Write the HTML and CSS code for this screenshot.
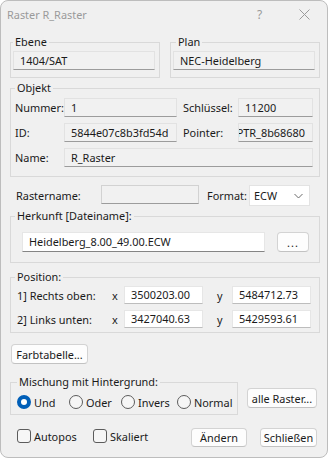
FILE: index.html
```html
<!DOCTYPE html>
<html lang="de">
<head>
    <meta charset="UTF-8">
    <title>Raster R_Raster</title>
    <link rel="stylesheet" href="styles.css">
</head>
<body>
    <div class="window">
        <div class="titlebar">
            <span class="title">Raster R_Raster</span>
            <span class="title-btn">?</span>
            <span class="title-btn">
                <svg width="11" height="11" viewBox="0 0 11 11"><path d="M0.5 0.5 L10.5 10.5 M10.5 0.5 L0.5 10.5" stroke="#9a9a9a" stroke-width="1" fill="none"/></svg>
            </span>
        </div>

        <div class="content">
            <div class="row-top">
                <fieldset class="group group-small">
                    <legend>Ebene</legend>
                    <div class="field readonly">1404/SAT</div>
                </fieldset>
                <fieldset class="group group-small plan">
                    <legend>Plan</legend>
                    <div class="field readonly">NEC-Heidelberg</div>
                </fieldset>
            </div>

            <fieldset class="group objekt">
                <legend>Objekt</legend>
                <div class="objekt-grid">
                    <span class="lbl">Nummer:</span>
                    <div class="field readonly">1</div>
                    <span class="lbl lbl-right">Schlüssel:</span>
                    <div class="field readonly">11200</div>

                    <span class="lbl">ID:</span>
                    <div class="field readonly">5844e07c8b3fd54d</div>
                    <span class="lbl lbl-right">Pointer:</span>
                    <div class="field readonly clip-left"><span>PTR_8b68680</span></div>

                    <span class="lbl">Name:</span>
                    <div class="field readonly span-3">R_Raster</div>
                </div>
            </fieldset>

            <div class="rastername-row">
                <span class="lbl rn-label">Rastername:</span>
                <div class="field readonly rn-field"></div>
                <span class="lbl format-label">Format:</span>
                <div class="select">
                    <span>ECW</span>
                    <svg width="9" height="6" viewBox="0 0 9 6"><path d="M0.5 1 L4.5 5 L8.5 1" stroke="#6a6a6a" stroke-width="1" fill="none"/></svg>
                </div>
            </div>

            <fieldset class="group herkunft">
                <legend>Herkunft [Dateiname]:</legend>
                <div class="file-row">
                    <div class="field edit file-field">Heidelberg_8.00_49.00.ECW</div>
                    <button class="btn dots">...</button>
                </div>
            </fieldset>

            <fieldset class="group position">
                <legend>Position:</legend>
                <div class="pos-grid">
                    <span class="lbl pos-label">1] Rechts oben:</span>
                    <span class="lbl">x</span>
                    <div class="field edit">3500203.00</div>
                    <span class="lbl pos-y">y</span>
                    <div class="field edit">5484712.73</div>

                    <span class="lbl pos-label">2] Links unten:</span>
                    <span class="lbl">x</span>
                    <div class="field edit">3427040.63</div>
                    <span class="lbl pos-y">y</span>
                    <div class="field edit">5429593.61</div>
                </div>
            </fieldset>

            <button class="btn farb">Farbtabelle...</button>

            <div class="misch-row">
                <fieldset class="group misch">
                    <legend>Mischung mit Hintergrund:</legend>
                    <div class="radios">
                        <label class="radio r-und"><span class="dot checked"></span>Und</label>
                        <label class="radio r-oder"><span class="dot"></span>Oder</label>
                        <label class="radio r-invers"><span class="dot"></span>Invers</label>
                        <label class="radio"><span class="dot"></span>Normal</label>
                    </div>
                </fieldset>
                <button class="btn alle">alle Raster...</button>
            </div>

            <div class="bottom-row">
                <label class="check c-auto"><span class="box"></span>Autopos</label>
                <label class="check"><span class="box"></span>Skaliert</label>
                <button class="btn aendern">Ändern</button>
                <button class="btn schliessen">Schließen</button>
            </div>
        </div>
    </div>
</body>
</html>
```

FILE: styles.css
```css
* {
    box-sizing: border-box;
}

body {
    margin: 0;
    background-color: #ffffff;
    font-family: 'Noto Sans', sans-serif;
    font-size: 10.9px;
    color: #1a1a1a;
}

.window {
    width: 328px;
    height: 458px;
    background-color: #f0f0f0;
    border: 1px solid #bdbdbd;
    border-radius: 8px;
    overflow: hidden;
}

/* title bar */
.titlebar {
    height: 30px;
    display: flex;
    align-items: center;
    padding-left: 6px;
    padding-bottom: 4px;
    color: #9a9a9a;
}

.title {
    flex: 1;
}

.title-btn {
    width: 45px;
    display: flex;
    justify-content: center;
    align-items: center;
    font-size: 12px;
}

.content {
    padding: 0 7px 0 9px;
}

/* group boxes */
.group {
    margin: 0;
    border: 1px solid #d9d9d9;
    min-width: 0;
}

.group legend {
    padding: 0 2px;
    line-height: 14px;
    height: 14px;
}

.row-top {
    display: flex;
    gap: 10px;
    margin-top: 4px;
}

.group-small {
    flex: 1;
    padding: 2px 4px 7px 2px;
}

.plan legend {
    margin-left: 3px;
}

.objekt {
    margin-top: 3px;
    padding: 3px 6px 9px 4px;
}

.objekt-grid {
    display: grid;
    grid-template-columns: 49px 113px 61px 75px;
    grid-auto-rows: 19px;
    row-gap: 6px;
    align-items: center;
}

.lbl {
    white-space: nowrap;
}

.lbl-right {
    padding-left: 6px;
}

.span-3 {
    grid-column: span 3;
}

/* text fields */
.field {
    height: 19px;
    line-height: 17px;
    padding: 0 6px;
    white-space: nowrap;
    overflow: hidden;
    border: 1px solid #e2e2e2;
}

.readonly {
    background-color: #f1f1f1;
    border-bottom-color: #9c9c9c;
}

.edit {
    background-color: #ffffff;
    border-color: #e6e6e6;
    border-bottom-color: #bdbdbd;
}

.clip-left {
    display: flex;
    justify-content: flex-end;
    padding-right: 7px;
}

.clip-left span {
    flex-shrink: 0;
}

.rastername-row {
    display: flex;
    align-items: flex-start;
    margin-top: 8px;
    height: 21px;
}

.rastername-row .lbl {
    line-height: 21px;
}

.rn-label {
    width: 91px;
    padding-left: 6px;
}

.rn-field {
    width: 98px;
    border-color: #d2d2d2;
    border-bottom-color: #9c9c9c;
}

.format-label {
    width: 42px;
    margin-left: 8px;
}

.select {
    width: 61px;
    height: 21px;
    background-color: #ffffff;
    border: 1px solid #e3e3e3;
    display: flex;
    align-items: center;
    justify-content: space-between;
    padding: 0 6px 0 4px;
}

.herkunft {
    margin-top: 3px;
    padding: 9px 10px 10px 4px;
}

.file-row {
    display: flex;
    align-items: center;
    gap: 12px;
    padding-left: 7px;
}

.file-field {
    flex: 1;
    height: 20px;
    line-height: 18px;
    border-bottom-color: #858585;
}

/* buttons */
.btn {
    font-family: inherit;
    font-size: inherit;
    color: #1a1a1a;
    background-color: #fdfdfd;
    border: 1px solid #d3d3d3;
    border-bottom-color: #c2c2c2;
    border-radius: 4px;
    padding: 0;
    height: 20px;
    line-height: 17px;
}

.dots {
    width: 32px;
    letter-spacing: 1px;
}

.position {
    margin-top: 7px;
    padding: 2px 8px 4px 4px;
}

.pos-grid {
    display: grid;
    grid-template-columns: 97px 12px 79px 29px 79px;
    grid-auto-rows: 18px;
    row-gap: 6px;
    align-items: center;
}

.pos-grid .field {
    height: 18px;
    line-height: 16px;
}

.pos-label {
    padding-left: 2px;
}

.pos-y {
    padding-left: 14px;
}

.farb {
    display: block;
    margin: 11px 0 0 1px;
    width: 77px;
}

.misch-row {
    display: flex;
    align-items: flex-start;
    margin-top: 11px;
}

.misch {
    width: 228px;
    padding: 5px 4px 4px 6px;
}

.radios {
    display: flex;
    height: 16px;
    align-items: center;
}

.radio {
    display: flex;
    align-items: center;
    gap: 3px;
}

.r-und,
.r-oder {
    width: 52px;
}

.r-invers {
    width: 56px;
}

.dot {
    width: 14px;
    height: 14px;
    border: 1px solid #5c5c5c;
    border-radius: 50%;
    background-color: #f6f6f6;
}

.dot.checked {
    border: 4px solid #005fb8;
    background-color: #ffffff;
}

.alle {
    width: 70px;
    margin: 13px 0 0 9px;
}

.bottom-row {
    display: flex;
    align-items: flex-start;
    margin-top: 13px;
    padding-left: 7px;
}

.check {
    display: flex;
    align-items: center;
    gap: 3px;
    height: 16px;
}

.c-auto {
    width: 76px;
}

.box {
    width: 14px;
    height: 14px;
    border: 1px solid #5c5c5c;
    border-radius: 3px;
    background-color: #f6f6f6;
}

.aendern {
    width: 56px;
    height: 19px;
    margin-left: auto;
}

.schliessen {
    width: 57px;
    height: 19px;
    margin-left: 13px;
    margin-right: 3px;
}
```
